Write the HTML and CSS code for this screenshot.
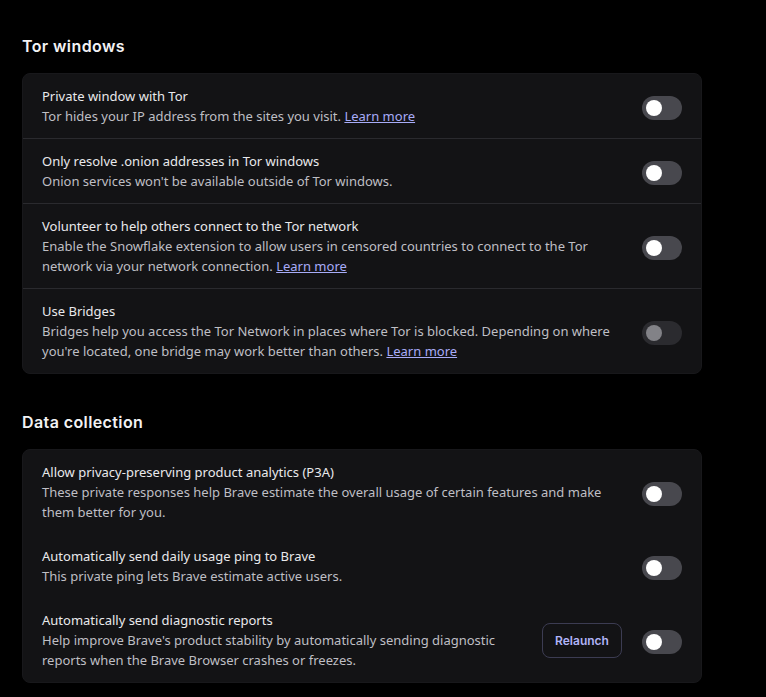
FILE: index.html
```html
<!DOCTYPE html>
<html>
<head>
<meta charset="utf-8">
<link rel="stylesheet" href="styles.css">
</head>
<body>
<main class="page">
  <section class="section">
    <h2 class="heading">Tor windows</h2>
    <div class="card divided">
      <div class="row">
        <div class="text">
          <div class="title">Private window with Tor</div>
          <div class="desc">Tor hides your IP address from the sites you visit. <a class="link" href="#">Learn more</a></div>
        </div>
        <span class="toggle"></span>
      </div>
      <div class="row">
        <div class="text">
          <div class="title">Only resolve .onion addresses in Tor windows</div>
          <div class="desc">Onion services won't be available outside of Tor windows.</div>
        </div>
        <span class="toggle"></span>
      </div>
      <div class="row">
        <div class="text">
          <div class="title">Volunteer to help others connect to the Tor network</div>
          <div class="desc">Enable the Snowflake extension to allow users in censored countries to connect to the Tor network via your network connection. <a class="link" href="#">Learn more</a></div>
        </div>
        <span class="toggle"></span>
      </div>
      <div class="row">
        <div class="text">
          <div class="title">Use Bridges</div>
          <div class="desc">Bridges help you access the Tor Network in places where Tor is blocked. Depending on where you're located, one bridge may work better than others. <a class="link" href="#">Learn more</a></div>
        </div>
        <span class="toggle disabled"></span>
      </div>
    </div>
  </section>
  <section class="section">
    <h2 class="heading">Data collection</h2>
    <div class="card">
      <div class="row">
        <div class="text">
          <div class="title">Allow privacy-preserving product analytics (P3A)</div>
          <div class="desc">These private responses help Brave estimate the overall usage of certain features and make them better for you.</div>
        </div>
        <span class="toggle"></span>
      </div>
      <div class="row">
        <div class="text">
          <div class="title">Automatically send daily usage ping to Brave</div>
          <div class="desc">This private ping lets Brave estimate active users.</div>
        </div>
        <span class="toggle"></span>
      </div>
      <div class="row">
        <div class="text">
          <div class="title">Automatically send diagnostic reports</div>
          <div class="desc">Help improve Brave's product stability by automatically sending diagnostic reports when the Brave Browser crashes or freezes.</div>
        </div>
        <button class="button">Relaunch</button>
        <span class="toggle"></span>
      </div>
    </div>
  </section>
</main>
</body>
</html>
```
FILE: styles.css
```css
html, body {
  margin: 0;
  padding: 0;
  background: #000;
}
body {
  font-family: "Noto Sans", sans-serif;
  font-size: 13px;
  line-height: 20px;
  color: #e6e6e9;
}
.page {
  width: 680px;
  padding: 34px 0 0 22px;
  display: flex;
  flex-direction: column;
  gap: 36px;
}
.heading {
  margin: 0 0 15px 0;
  font-family: "Inter", sans-serif;
  font-weight: 600;
  font-size: 16px;
  line-height: 24px;
  letter-spacing: 0.4px;
  color: #f2f2f4;
}
.card {
  background: #131315;
  border: 1px solid #18181b;
  border-radius: 8px;
  display: flex;
  flex-direction: column;
}
.row {
  display: flex;
  align-items: center;
  gap: 16px;
  padding: 12px 19px 12px 19px;
}
.divided .row + .row {
  border-top: 1px solid #2a2a2e;
}
.text {
  flex: 1;
  min-width: 0;
}
.title {
  color: #e9e9ec;
}
.desc {
  color: #bfbfc4;
}
.link {
  color: #a8acf8;
  text-decoration: underline;
}
.toggle {
  position: relative;
  flex: none;
  width: 40px;
  height: 24px;
  margin-top: 3px;
  border-radius: 12px;
  background: #48484e;
}
.toggle::after {
  content: "";
  position: absolute;
  left: 4px;
  top: 4px;
  width: 16px;
  height: 16px;
  border-radius: 50%;
  background: #fff;
}
.toggle.disabled {
  background: #2b2b2f;
}
.toggle.disabled::after {
  background: #828287;
}
.button {
  flex: none;
  margin-right: 4px;
  width: 80px;
  height: 35px;
  border: 1px solid #3c3c52;
  border-radius: 8px;
  background: transparent;
  font-family: "Inter", sans-serif;
  font-weight: 600;
  font-size: 12px;
  color: #b1b4f7;
  padding: 0;
}
```
